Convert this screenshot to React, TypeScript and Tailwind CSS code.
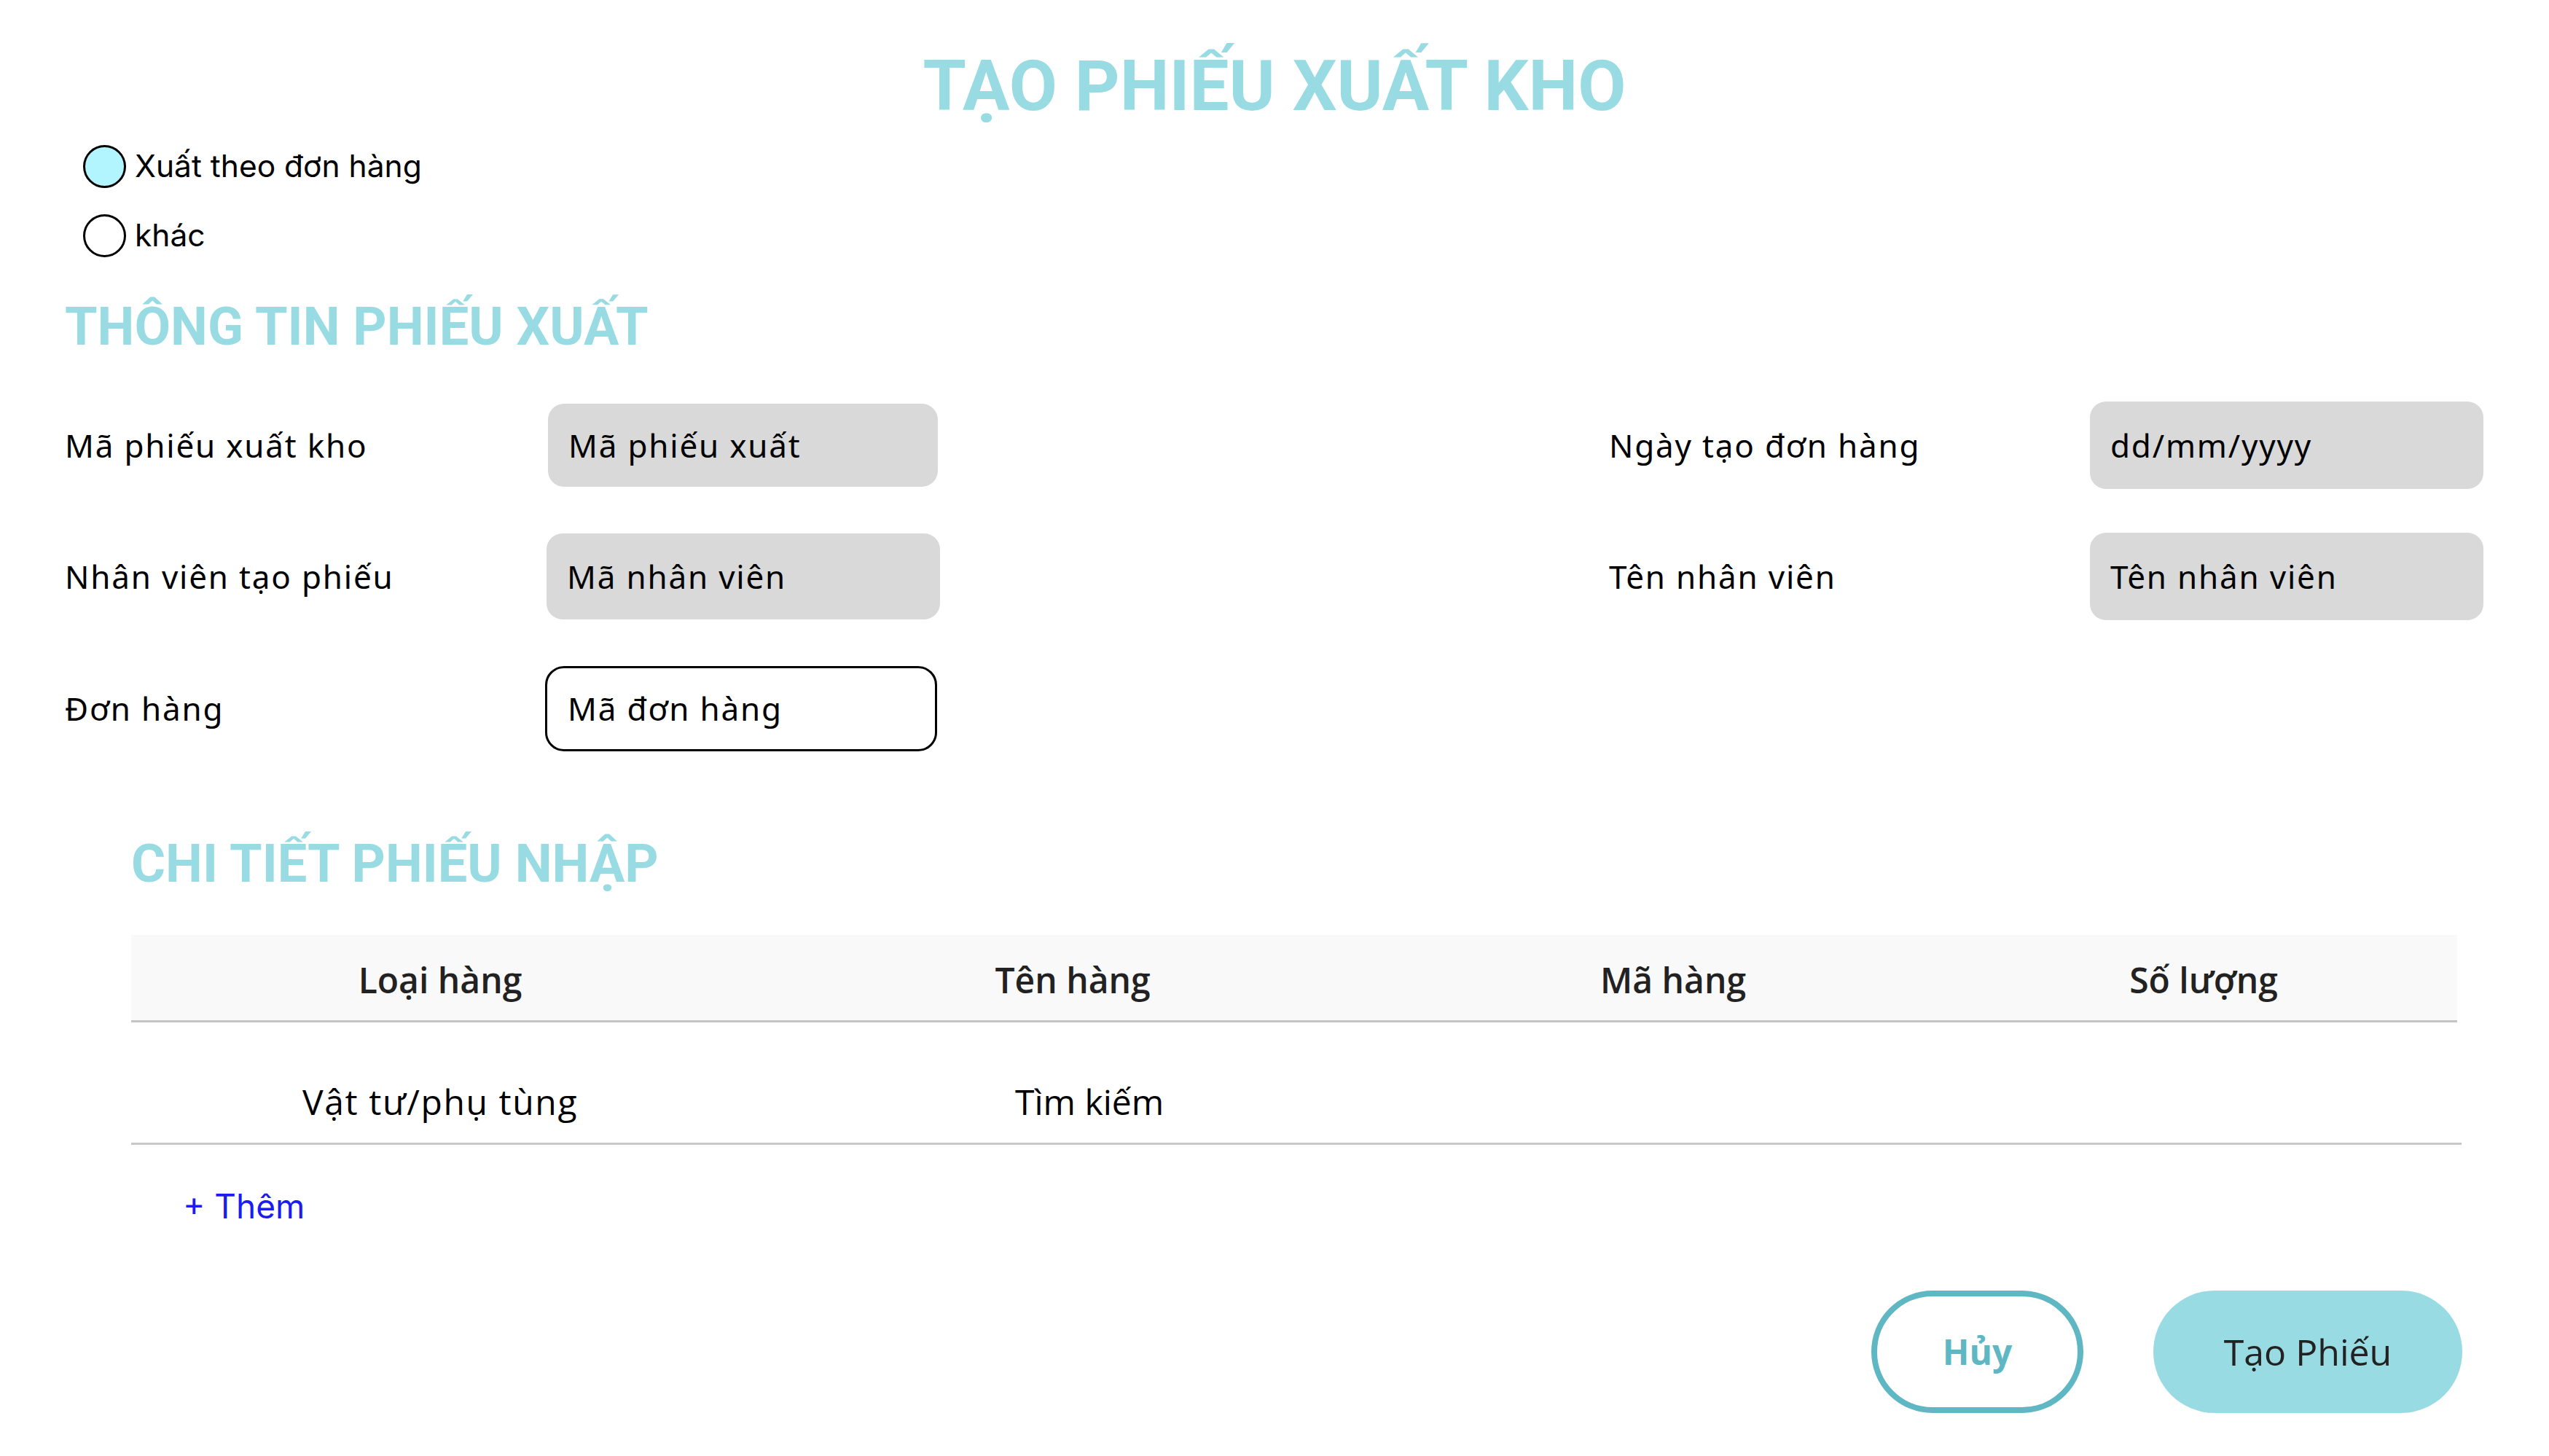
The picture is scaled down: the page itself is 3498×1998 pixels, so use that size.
import React from "react";

const roboto = { fontFamily: "Roboto, 'Liberation Sans', sans-serif" };

function Radio({ checked, label }: { checked?: boolean; label: string }) {
  return (
    <div className="flex h-[60px] items-center">
      <div
        className={
          "box-border h-[59px] w-[59px] rounded-full border-[3px] border-black " +
          (checked ? "bg-[#B3F5FF]" : "bg-white")
        }
      />
      <span className="ml-[12px] font-['Inter','Liberation_Sans',sans-serif] text-[42.5px] text-black">
        {label}
      </span>
    </div>
  );
}

function Field({
  w,
  h,
  text,
  outlined,
}: {
  w: string;
  h: string;
  text: string;
  outlined?: boolean;
}) {
  return (
    <div
      className={
        "box-border flex items-center pl-[28px] font-['Noto_Sans','Open_Sans',sans-serif] text-[44px] tracking-[1.8px] text-black " +
        w +
        " " +
        h +
        " " +
        (outlined
          ? "rounded-[26px] border-[3px] border-black bg-white"
          : "rounded-[22px] bg-[#D9D9D9]")
      }
    >
      {text}
    </div>
  );
}

function Label({ text }: { text: string }) {
  return (
    <div className="font-['Noto_Sans','Open_Sans',sans-serif] text-[44px] tracking-[1.8px] text-black">
      {text}
    </div>
  );
}

export default function App() {
  return (
    <div className="relative h-[1998px] w-[3498px] overflow-hidden bg-white">
      {/* Title */}
      <div
        className="pt-[70px] text-center text-[96px] font-bold leading-none text-[#99DBE3]"
        style={roboto}
      >
        TẠO PHIẾU XUẤT KHO
      </div>

      {/* Radios */}
      <div className="mt-[32px] flex flex-col gap-[35px] pl-[114px]">
        <Radio checked label="Xuất theo đơn hàng" />
        <Radio label="khác" />
      </div>

      {/* Section 1 heading */}
      <div
        className="mt-[60px] pl-[89px] text-[72px] font-bold leading-none text-[#99DBE3]"
        style={roboto}
      >
        THÔNG TIN PHIẾU XUẤT
      </div>

      {/* Form */}
      <div className="pl-[89px] pr-[90px]">
        <div className="mt-[66px] flex h-[120px] items-center">
          <div className="flex w-[663px] items-center">
            <Label text="Mã phiếu xuất kho" />
          </div>
          <Field w="w-[535px]" h="h-[114px]" text="Mã phiếu xuất" />
          <div className="flex-1" />
          <div className="flex w-[660px] items-center">
            <Label text="Ngày tạo đơn hàng" />
          </div>
          <Field w="w-[540px]" h="h-[120px]" text="dd/mm/yyyy" />
        </div>

        <div className="mt-[60px] flex h-[120px] items-center">
          <div className="flex w-[661px] items-center">
            <Label text="Nhân viên tạo phiếu" />
          </div>
          <Field w="w-[540px]" h="h-[118px]" text="Mã nhân viên" />
          <div className="flex-1" />
          <div className="flex w-[660px] items-center">
            <Label text="Tên nhân viên" />
          </div>
          <Field w="w-[540px]" h="h-[120px]" text="Tên nhân viên" />
        </div>

        <div className="mt-[61px] flex h-[120px] items-center">
          <div className="flex w-[659px] items-center">
            <Label text="Đơn hàng" />
          </div>
          <Field w="w-[538px]" h="h-[117px]" text="Mã đơn hàng" outlined />
        </div>
      </div>

      {/* Section 2 */}
      <div className="pl-[180px]">
        <div
          className="mt-[118px] text-[72px] font-bold leading-none text-[#99DBE3]"
          style={roboto}
        >
          CHI TIẾT PHIẾU NHẬP
        </div>

        {/* Table header */}
        <div className="mt-[61px] box-border grid h-[120px] w-[3192px] grid-cols-[848px_888px_760px_1fr] items-center border-b-[3px] border-[#C4C4C4] bg-[#F9F9F9] pt-[6px] font-['Open_Sans','Noto_Sans',sans-serif] text-[48px] font-semibold text-[#222222]">
          <div className="text-center">Loại hàng</div>
          <div className="text-center">Tên hàng</div>
          <div className="text-center">Mã hàng</div>
          <div className="text-center">Số lượng</div>
        </div>

        {/* Table row */}
        <div className="box-border grid h-[168px] w-[3198px] grid-cols-[848px_888px_760px_1fr] border-b-[3px] border-[#C8C8C8] pt-[73px] font-['Open_Sans','Noto_Sans',sans-serif] text-[48px] text-black">
          <div className="text-center tracking-[1.6px]">Vật tư/phụ tùng</div>
          <div className="pl-[365px]">Tìm kiếm</div>
          <div />
          <div />
        </div>

        {/* Add */}
        <div className="ml-[71px] mt-[50px] font-['Inter','Liberation_Sans',sans-serif] text-[46px] text-[#1C1CF0]">
          + Thêm
        </div>
      </div>

      {/* Buttons */}
      <div className="mt-[81px] flex justify-end gap-[96px] pr-[119px]">
        <button className="box-border flex h-[168px] w-[291px] items-center justify-center rounded-full border-[8px] border-[#5FB7C3] bg-white font-['Open_Sans','Noto_Sans',sans-serif] text-[48px] font-bold text-[#5FB7C3]">
          Hủy
        </button>
        <button className="box-border flex h-[168px] w-[424px] items-center justify-center rounded-full bg-[#99DBE3] font-['Open_Sans','Noto_Sans',sans-serif] text-[50px] text-[#222222]">
          Tạo Phiếu
        </button>
      </div>
    </div>
  );
}
